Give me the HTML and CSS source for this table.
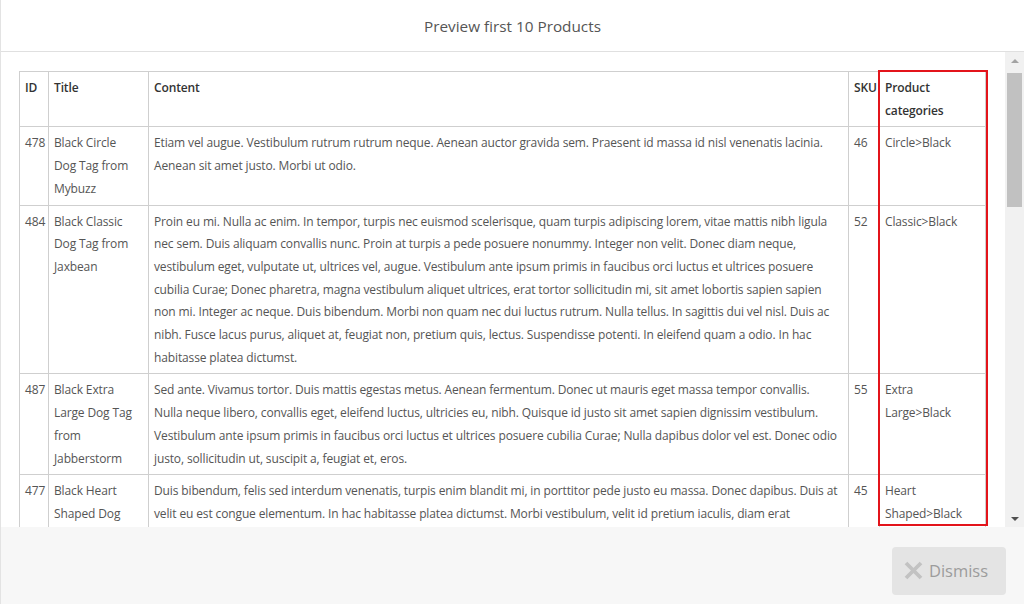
FILE: index.html
```html
<!DOCTYPE html>
<html>
<head>
<meta charset="utf-8">
<link rel="stylesheet" href="styles.css">
</head>
<body>
<div class="modal">
  <div class="modal-header">Preview first 10 Products</div>
  <div class="modal-body">
    <div class="scroll-content">
      <table class="products">
        <colgroup>
          <col class="c-id"><col class="c-title"><col class="c-content"><col class="c-sku"><col class="c-cat">
        </colgroup>
        <thead>
          <tr><th>ID</th><th>Title</th><th>Content</th><th>SKU</th><th>Product categories</th></tr>
        </thead>
        <tbody>
          <tr>
            <td>478</td>
            <td>Black Circle Dog Tag from Mybuzz</td>
            <td>Etiam vel augue. Vestibulum rutrum rutrum neque. Aenean auctor gravida sem. Praesent id massa id nisl venenatis lacinia. Aenean sit amet justo. Morbi ut odio.</td>
            <td>46</td>
            <td>Circle&gt;Black</td>
          </tr>
          <tr>
            <td>484</td>
            <td>Black Classic Dog Tag from Jaxbean</td>
            <td>Proin eu mi. Nulla ac enim. In tempor, turpis nec euismod scelerisque, quam turpis adipiscing lorem, vitae mattis nibh ligula nec sem. Duis aliquam convallis nunc. Proin at turpis a pede posuere nonummy. Integer non velit. Donec diam neque, vestibulum eget, vulputate ut, ultrices vel, augue. Vestibulum ante ipsum primis in faucibus orci luctus et ultrices posuere cubilia Curae; Donec pharetra, magna vestibulum aliquet ultrices, erat tortor sollicitudin mi, sit amet lobortis sapien sapien non mi. Integer ac neque. Duis bibendum. Morbi non quam nec dui luctus rutrum. Nulla tellus. In sagittis dui vel nisl. Duis ac nibh. Fusce lacus purus, aliquet at, feugiat non, pretium quis, lectus. Suspendisse potenti. In eleifend quam a odio. In hac habitasse platea dictumst.</td>
            <td>52</td>
            <td>Classic&gt;Black</td>
          </tr>
          <tr>
            <td>487</td>
            <td>Black Extra Large Dog Tag from Jabberstorm</td>
            <td>Sed ante. Vivamus tortor. Duis mattis egestas metus. Aenean fermentum. Donec ut mauris eget massa tempor convallis. Nulla neque libero, convallis eget, eleifend luctus, ultricies eu, nibh. Quisque id justo sit amet sapien dignissim vestibulum. Vestibulum ante ipsum primis in faucibus orci luctus et ultrices posuere cubilia Curae; Nulla dapibus dolor vel est. Donec odio justo, sollicitudin ut, suscipit a, feugiat et, eros.</td>
            <td>55</td>
            <td>Extra Large&gt;Black</td>
          </tr>
          <tr>
            <td>477</td>
            <td>Black Heart Shaped Dog Tag from Skinte</td>
            <td>Duis bibendum, felis sed interdum venenatis, turpis enim blandit mi, in porttitor pede justo eu massa. Donec dapibus. Duis at velit eu est congue elementum. In hac habitasse platea dictumst. Morbi vestibulum, velit id pretium iaculis, diam erat fermentum justo, nec condimentum neque sapien placerat ante. Nam nisl.</td>
            <td>45</td>
            <td>Heart Shaped&gt;Black</td>
          </tr>
        </tbody>
      </table>
      <div class="highlight"></div>
    </div>
    <div class="scrollbar">
      <div class="sb-arrow sb-up"></div>
      <div class="sb-track"><div class="sb-thumb"></div></div>
      <div class="sb-arrow sb-down"></div>
    </div>
  </div>
  <div class="modal-footer">
    <button class="btn-dismiss">
      <svg class="x-icon" width="19" height="19" viewBox="0 0 19 19"><path d="M2 2 L17 17 M17 2 L2 17" stroke="#c2c2c2" stroke-width="3.8" stroke-linecap="butt"/></svg>
      <span>Dismiss</span>
    </button>
  </div>
</div>
</body>
</html>
```
FILE: styles.css
```css
* { box-sizing: border-box; }
html, body { margin: 0; padding: 0; }
body {
  width: 1024px;
  height: 604px;
  overflow: hidden;
  background: #fff;
  font-family: "Open Sans", "Noto Sans", sans-serif;
  color: #555;
}
.modal {
  display: flex;
  flex-direction: column;
  height: 604px;
  border-left: 1px solid #e3e3e3;
}
.modal-header {
  height: 52px;
  border-bottom: 1px solid #e0e0e0;
  display: flex;
  align-items: center;
  justify-content: center;
  font-size: 15.3px;
  color: #555;
  padding-top: 1px;
}
.modal-body {
  height: 475px;
  display: flex;
  overflow: hidden;
}
.scroll-content {
  position: relative;
  flex: 1;
  padding: 19px 0 0 18px;
  overflow: hidden;
}
.products {
  border-collapse: collapse;
  table-layout: fixed;
  width: 966px;
  font-size: 12px;
  line-height: 22.7px;
  letter-spacing: -0.13px;
}
.c-id { width: 29px; }
.c-title { width: 100px; }
.c-content { width: 700px; }
.c-sku { width: 31px; }
.c-cat { width: 106px; }
.products th, .products td {
  border: 1px solid #cfcfcf;
  padding: 5px 8px 4px 5px;
  vertical-align: top;
  text-align: left;
}
.products th {
  font-weight: 600;
  color: #333;
}
.products td { color: #555; }
.highlight {
  position: absolute;
  left: 877px;
  top: 18px;
  width: 110px;
  height: 456px;
  border: 2px solid #e3141b;
  pointer-events: none;
}
.scrollbar {
  width: 19px;
  display: flex;
  flex-direction: column;
  background: #f1f1f1;
}
.sb-arrow {
  height: 17px;
  display: flex;
  align-items: center;
  justify-content: center;
}
.sb-up::before {
  content: "";
  border-left: 4px solid transparent;
  border-right: 4px solid transparent;
  border-bottom: 4px solid #a3a3a3;
}
.sb-down::before {
  content: "";
  border-left: 4px solid transparent;
  border-right: 4px solid transparent;
  border-top: 4px solid #505050;
}
.sb-track {
  flex: 1;
  padding: 4px 2px 0 2px;
}
.sb-thumb {
  height: 134px;
  background: #c1c1c1;
}
.modal-footer {
  flex: 1;
  background: #f7f7f7;
  display: flex;
  justify-content: flex-end;
  align-items: flex-start;
  padding: 20px 18px 0 0;
}
.btn-dismiss {
  width: 114px;
  height: 48px;
  border: none;
  border-radius: 4px;
  background: #e4e4e4;
  display: flex;
  align-items: center;
  justify-content: center;
  gap: 6px;
  font-family: "Open Sans", "Noto Sans", sans-serif;
  font-size: 16.5px;
  color: #9c9c9c;
  padding: 0 6px 2px 0;
}
.x-icon { display: block; }
```
